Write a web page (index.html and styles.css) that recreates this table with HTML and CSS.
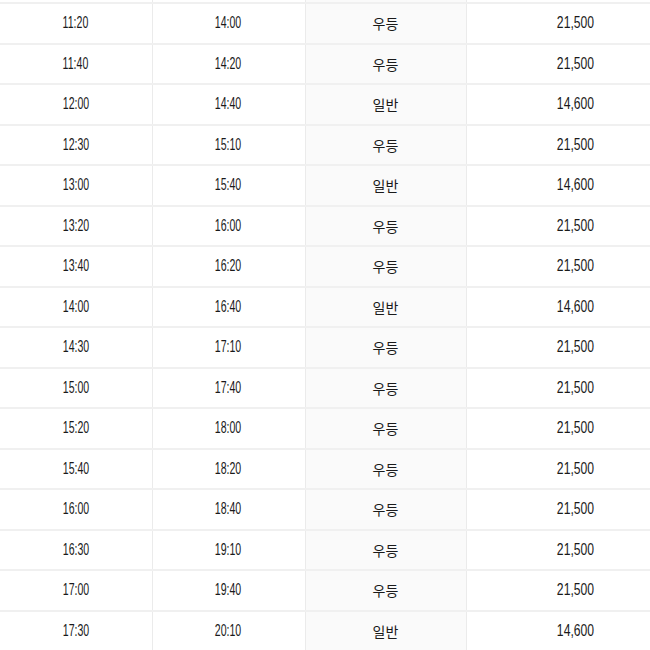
FILE: index.html
```html
<!DOCTYPE html>
<html lang="ko">
<head>
<meta charset="utf-8">
<link rel="stylesheet" href="styles.css">
</head>
<body>
<div class="wrap">
<table class="timetable">
<colgroup><col class="c1"><col class="c2"><col class="c3"><col class="c4"></colgroup>
<tbody>
<tr class="cut"><td></td><td></td><td class="grade"></td><td></td></tr>
<tr><td><span class="t">11:20</span></td><td><span class="t">14:00</span></td><td class="grade">우등</td><td><span class="p">21,500</span></td></tr>
<tr><td><span class="t">11:40</span></td><td><span class="t">14:20</span></td><td class="grade">우등</td><td><span class="p">21,500</span></td></tr>
<tr><td><span class="t">12:00</span></td><td><span class="t">14:40</span></td><td class="grade">일반</td><td><span class="p">14,600</span></td></tr>
<tr><td><span class="t">12:30</span></td><td><span class="t">15:10</span></td><td class="grade">우등</td><td><span class="p">21,500</span></td></tr>
<tr><td><span class="t">13:00</span></td><td><span class="t">15:40</span></td><td class="grade">일반</td><td><span class="p">14,600</span></td></tr>
<tr><td><span class="t">13:20</span></td><td><span class="t">16:00</span></td><td class="grade">우등</td><td><span class="p">21,500</span></td></tr>
<tr><td><span class="t">13:40</span></td><td><span class="t">16:20</span></td><td class="grade">우등</td><td><span class="p">21,500</span></td></tr>
<tr><td><span class="t">14:00</span></td><td><span class="t">16:40</span></td><td class="grade">일반</td><td><span class="p">14,600</span></td></tr>
<tr><td><span class="t">14:30</span></td><td><span class="t">17:10</span></td><td class="grade">우등</td><td><span class="p">21,500</span></td></tr>
<tr><td><span class="t">15:00</span></td><td><span class="t">17:40</span></td><td class="grade">우등</td><td><span class="p">21,500</span></td></tr>
<tr><td><span class="t">15:20</span></td><td><span class="t">18:00</span></td><td class="grade">우등</td><td><span class="p">21,500</span></td></tr>
<tr><td><span class="t">15:40</span></td><td><span class="t">18:20</span></td><td class="grade">우등</td><td><span class="p">21,500</span></td></tr>
<tr><td><span class="t">16:00</span></td><td><span class="t">18:40</span></td><td class="grade">우등</td><td><span class="p">21,500</span></td></tr>
<tr><td><span class="t">16:30</span></td><td><span class="t">19:10</span></td><td class="grade">우등</td><td><span class="p">21,500</span></td></tr>
<tr><td><span class="t">17:00</span></td><td><span class="t">19:40</span></td><td class="grade">우등</td><td><span class="p">21,500</span></td></tr>
<tr><td><span class="t">17:30</span></td><td><span class="t">20:10</span></td><td class="grade">일반</td><td><span class="p">14,600</span></td></tr>
</tbody>
</table>
</div>
</body>
</html>
```
FILE: styles.css
```css
html, body {
  margin: 0;
  padding: 0;
  background: #fff;
  overflow: hidden;
}
.wrap {
  width: 650px;
  height: 650px;
  overflow: hidden;
}
.timetable {
  border-collapse: collapse;
  table-layout: fixed;
  width: 684px;
  font-family: "Liberation Sans", "Noto Sans CJK KR", sans-serif;
  font-size: 16px;
  color: #1a1a1a;
}
.c1 { width: 152px; }
.c2 { width: 153px; }
.c3 { width: 161px; }
.c4 { width: 218px; }
.timetable td {
  height: 38.5px;
  padding: 0;
  text-align: center;
  vertical-align: middle;
  border-bottom: 2px solid #f0f0f0;
  border-right: 1px solid #ebebeb;
}
.timetable tr.cut td {
  height: 2px;
}
.t,
.p {
  display: inline-block;
  transform-origin: center;
}
.t {
  transform: scaleX(0.66);
}
.p {
  transform: scaleX(0.76);
}
.timetable td.grade {
  background: #fafafa;
  font-family: "Noto Sans CJK KR", sans-serif;
  font-size: 14px;
}
```
